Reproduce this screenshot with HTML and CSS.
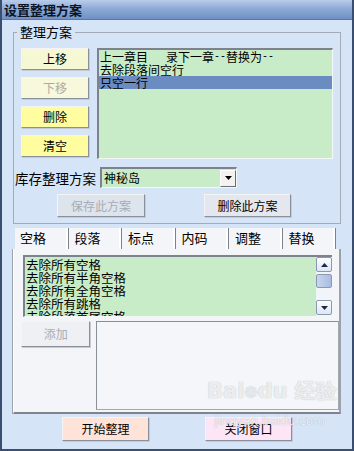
FILE: index.html
```html
<!DOCTYPE html>
<html>
<head>
<meta charset="utf-8">
<link rel="stylesheet" href="styles.css">
</head>
<body>
<div class="window">
  <div class="titlebar">设置整理方案</div>
  <div class="body">
    <fieldset class="group">
      <legend>整理方案</legend>
      <div class="row1">
        <div class="btncol">
          <button class="btn pale">上移</button>
          <button class="btn paledis">下移</button>
          <button class="btn yellow">删除</button>
          <button class="btn yellow">清空</button>
        </div>
        <div class="listbox">
          <div class="item">上一章目<span class="gap"></span>录下一章<span class="mono">--</span>替换为<span class="mono">--</span></div>
          <div class="item">去除段落间空行</div>
          <div class="item sel">只空一行</div>
        </div>
      </div>
      <div class="row2">
        <span class="lbl">库存整理方案</span>
        <div class="combo">
          <span class="combotext">神秘岛</span>
          <span class="ddbtn"><svg width="7" height="4" viewBox="0 0 7 4"><path d="M0 0H7L3.5 4Z" fill="#000"/></svg></span>
        </div>
      </div>
      <div class="row3">
        <button class="btn gray dis save">保存此方案</button>
        <button class="btn gray del">删除此方案</button>
      </div>
    </fieldset>

    <div class="tabs">
      <div class="tab active">空格</div>
      <div class="tab">段落</div>
      <div class="tab">标点</div>
      <div class="tab">内码</div>
      <div class="tab">调整</div>
      <div class="tab">替换</div>
    </div>
    <div class="panel">
      <div class="list2">
        <div class="list2items">
          <div class="item2">去除所有空格</div>
          <div class="item2">去除所有半角空格</div>
          <div class="item2">去除所有全角空格</div>
          <div class="item2">去除所有跳格</div>
          <div class="item2">去除段落首尾空格</div>
        </div>
        <div class="scrollbar">
          <div class="sbtn"><svg width="7" height="4" viewBox="0 0 7 4"><path d="M0 4H7L3.5 0Z" fill="#1a2a4a"/></svg></div>
          <div class="sthumb"></div>
          <div class="strack"></div>
          <div class="sbtn"><svg width="7" height="4" viewBox="0 0 7 4"><path d="M0 0H7L3.5 4Z" fill="#1a2a4a"/></svg></div>
        </div>
      </div>
      <div class="row4">
        <button class="btn graydis add">添加</button>
        <div class="textarea"></div>
      </div>
    </div>
    <div class="bottom">
      <button class="btn peach">开始整理</button>
      <button class="btn pink">关闭窗口</button>
    </div>
  </div>
  <div class="watermark">
    <div class="wm1">Bai<span class="paw">&#x2741;</span>du 经验</div>
    <div class="wm2">jingyan.baidu.com</div>
  </div>
</div>
</body>
</html>
```

FILE: styles.css
```css
* { box-sizing: border-box; }
html, body { margin: 0; padding: 0; }
body {
  width: 354px;
  height: 451px;
  overflow: hidden;
  font-family: "Noto Sans CJK SC", "Noto Sans", sans-serif;
  font-size: 12px;
  color: #000;
}
.window {
  position: relative;
  width: 354px;
  height: 451px;
  background: #d5e4f7;
  border-left: 2px solid #3a4f70;
  border-right: 2px solid #3a4f70;
  border-bottom: 2px solid #3a4f70;
  display: flex;
  flex-direction: column;
}
.titlebar {
  height: 20px;
  line-height: 20px;
  padding-left: 2px;
  font-size: 13px;
  font-weight: bold;
  color: #0c1426;
  background: linear-gradient(#b9cdea, #8eaad6 45%, #6f90c3);
  border-bottom: 1px solid #5a77a6;
  flex: none;
}
.body {
  padding-left: 11px;
  display: flex;
  flex-direction: column;
}
.group {
  margin: 4px 0 0 0;
  width: 328px;
  padding: 0 0 6px 1px;
  border: 1px solid #a3abb6;
  min-width: 0;
}
.group legend {
  font-size: 13px;
  line-height: 16px;
  padding: 0 3px;
  margin-left: 2px;
}
.row1 {
  display: flex;
  gap: 8px;
  padding-left: 6px;
  margin-top: 8px;
}
.btncol {
  display: flex;
  flex-direction: column;
  gap: 7px;
  width: 68px;
}
.btn {
  appearance: none;
  font-family: "Noto Sans CJK SC", "Noto Sans", sans-serif;
  font-size: 12px;
  line-height: 14px;
  height: 22px;
  padding: 0;
  margin: 0;
  color: #000;
  border: 1px solid;
  border-color: #f4f4f4 #8a9099 #8a9099 #f4f4f4;
  box-shadow: 1px 1px 0 #c4cbd4;
}
.pale { background: #f6f8d4; }
.paledis { background: #f8f9dc; color: #a8aca0; }
.yellow { background: #fffda0; }
.gray { background: #e4e8ee; }
.dis { color: #a6adb6; background: #dee4eb; }
.graydis { background: #eef0f3; color: #a8adb3; }
.listbox {
  width: 236px;
  height: 111px;
  background: #c8ecc8;
  border-top: 2px solid #7c838c;
  border-left: 2px solid #7c838c;
  border-right: 1px solid #f4f8f4;
  border-bottom: 1px solid #f4f8f4;
}
.item {
  height: 13px;
  line-height: 13px;
  padding-left: 1px;
  white-space: nowrap;
  display: flex;
  align-items: center;
}
.gap { display: inline-block; width: 18px; }
.mono {
  font-family: "Liberation Mono", monospace;
  font-size: 10px;
}
.item.sel { background: #6b8cc1; }
.row2 {
  display: flex;
  align-items: center;
  margin-top: 8px;
  height: 21px;
}
.lbl {
  font-size: 13.5px;
  width: 85px;
  white-space: nowrap;
}
.combo {
  width: 137px;
  height: 21px;
  background: #c8ecc8;
  border-top: 2px solid #7c838c;
  border-left: 2px solid #7c838c;
  border-right: 1px solid #f4f8f4;
  border-bottom: 1px solid #f4f8f4;
  display: flex;
  align-items: center;
  justify-content: space-between;
}
.combotext { padding-left: 2px; line-height: 16px; }
.ddbtn {
  width: 16px;
  height: 17px;
  background: #f2f2f0;
  border: 1px solid;
  border-color: #fff #6c6c6c #6c6c6c #fff;
  display: flex;
  align-items: center;
  justify-content: center;
}
.row3 {
  display: flex;
  margin-top: 6px;
  padding-left: 42px;
  gap: 59px;
}
.save { width: 88px; height: 23px; }
.del { width: 87px; height: 23px; }

.tabs {
  display: flex;
  margin-top: 4px;
  margin-left: 2px;
  height: 21px;
}
.tab {
  width: 53.5px;
  height: 21px;
  background: #f3f5f8;
  font-size: 13px;
  line-height: 20px;
  padding-left: 6px;
  border-right: 1px solid #7d828a;
  box-shadow: inset -2px 0 0 #ffffff;
}
.tab.active { padding-left: 5px; }
.panel {
  width: 328px;
  height: 165px;
  background: #f3f5f8;
  border-left: 1px solid #ffffff;
  border-right: 2px solid #9aa1aa;
  border-bottom: 2px solid #7e848c;
  box-shadow: -1px 0 0 #9ca3ad;
  padding: 6px 0 0 9px;
  display: flex;
  flex-direction: column;
}
.list2 {
  width: 309px;
  height: 62px;
  display: flex;
  background: #c8ecc8;
  border-top: 2px solid #7c838c;
  border-left: 2px solid #7c838c;
  border-bottom: 1px solid #f4f8f4;
  overflow: hidden;
}
.list2items {
  flex: 1;
  overflow: hidden;
  padding-top: 1px;
}
.item2 {
  font-size: 12.5px;
  height: 13px;
  line-height: 13px;
  padding-left: 1px;
  white-space: nowrap;
}
.scrollbar {
  width: 16px;
  display: flex;
  flex-direction: column;
  background: #f1f4f9;
  padding-bottom: 1px;
}
.sbtn {
  height: 15px;
  border: 1px solid #8b98b4;
  border-radius: 2px;
  background: linear-gradient(#fdfeff, #dde6f4);
  display: flex;
  align-items: center;
  justify-content: center;
}
.sthumb {
  height: 14px;
  margin-top: 2px;
  border: 1px solid #8b98b4;
  border-radius: 2px;
  background: linear-gradient(90deg, #c7d5ee, #a9bde0);
}
.strack { flex: 1; }
.row4 {
  display: flex;
  gap: 6px;
  margin-top: 4px;
  margin-left: -2px;
}
.add { width: 70px; height: 26px; }
.textarea {
  width: 245px;
  height: 89px;
  border: 1px solid #a2a8b0;
  border-top-color: #8a9098;
  border-left-color: #8a9098;
  background: #f4f6f9;
}
.bottom {
  display: flex;
  gap: 56px;
  padding-left: 49px;
  margin-top: 3px;
}
.peach { background: #ffe3d8; width: 87px; height: 24px; }
.pink { background: #fce5f4; width: 87px; height: 24px; }

.watermark {
  position: absolute;
  left: 205px;
  top: 374px;
  width: 125px;
  pointer-events: none;
  text-align: center;
  white-space: nowrap;
  color: rgba(255,255,255,0.8);
  font-family: "DejaVu Sans", sans-serif;
}
.wm1 {
  font-size: 21px;
  font-weight: bold;
  line-height: 34px;
  text-shadow: 0 0 1px rgba(110,120,130,0.6);
}
.paw { font-size: 16px; }
.wm2 {
  font-size: 12px;
  line-height: 14px;
  margin-top: 4px;
  text-shadow: 0 0 1px rgba(110,120,130,0.6);
}
```
